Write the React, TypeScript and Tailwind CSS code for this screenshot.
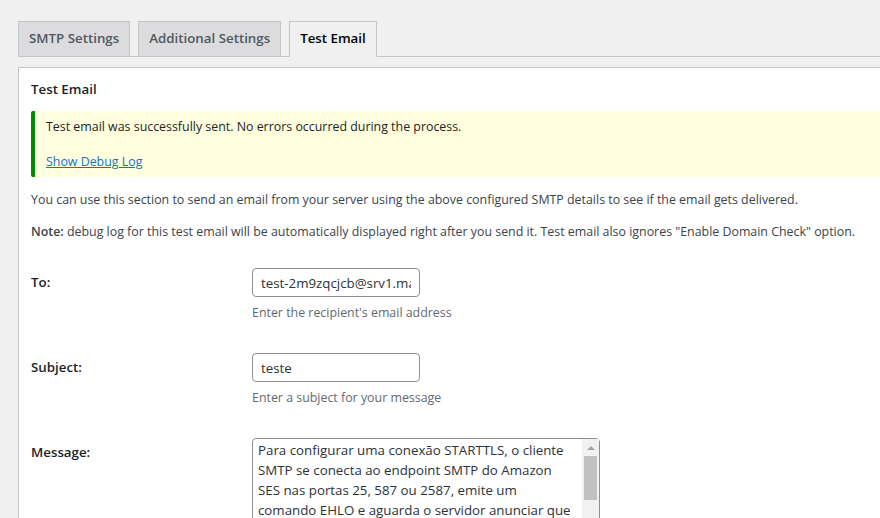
import React from "react";

const font = { fontFamily: '"Open Sans", "Noto Sans", sans-serif' };

const message =
  "Para configurar uma conexão STARTTLS, o cliente SMTP se conecta ao endpoint SMTP do Amazon SES nas portas 25, 587 ou 2587, emite um comando EHLO e aguarda o servidor anunciar que ele suporta a extensão SMTP STARTTLS. O cliente então emite o comando STARTTLS, iniciando a negociação TLS.";

function Tab({ label, active }: { label: string; active?: boolean }) {
  return (
    <div
      className={
        active
          ? "h-[36px] px-[10px] flex items-center border border-[#c3c4c7] border-b-[#f0f0f1] bg-[#f0f0f1] text-[13.3px] font-semibold text-black -mb-px"
          : "h-[36px] px-[10px] flex items-center border border-[#c3c4c7] bg-[#dcdcde] text-[13.3px] font-semibold text-[#50575e] -mb-px"
      }
    >
      {label}
    </div>
  );
}

function Field({ label, value, hint }: { label: string; value: string; hint: string }) {
  return (
    <div className="flex">
      <div className="w-[221px] pt-[5px] text-[13.3px] font-semibold text-[#1d2327]">{label}</div>
      <div>
        <input
          readOnly
          value={value}
          className="w-[168px] h-[29px] px-[8px] border border-[#8c8f94] rounded-[4px] text-[13.3px] text-[#2c3338] outline-none"
          style={font}
        />
        <p className="mt-[6px] text-[#646970] leading-[20px]">{hint}</p>
      </div>
    </div>
  );
}

export default function App() {
  return (
    <div className="w-[880px] h-[518px] overflow-hidden bg-[#f0f0f1] text-[#3c434a] text-[12.4px]" style={font}>
      <div className="pt-[21px] pl-[18px]">
        <div className="flex gap-[8px] border-b border-[#c3c4c7]">
          <Tab label="SMTP Settings" />
          <Tab label="Additional Settings" />
          <Tab label="Test Email" active />
        </div>

        <div className="mt-[10px] bg-white border border-[#c3c4c7] border-r-0 pl-[12px]">
          <h2 className="pt-[11px] pb-[12px] text-[13.3px] font-semibold text-[#1d2327] leading-[20px]">Test Email</h2>

          <div className="bg-[#ffffe0] border-l-4 border-[#008a00] rounded-l-[2px] pl-[11px] pt-[6px] pb-[5px] leading-[20px]">
            <p className="text-[#1d2327]">Test email was successfully sent. No errors occurred during the process.</p>
            <p className="mt-[15px]">
              <a href="#" className="text-[#2271b1] underline">Show Debug Log</a>
            </p>
          </div>

          <p className="mt-[13px] leading-[20px]">
            You can use this section to send an email from your server using the above configured SMTP details to see if the email gets delivered.
          </p>
          <p className="mt-[12px] leading-[20px]">
            <strong className="font-semibold">Note:</strong> debug log for this test email will be automatically displayed right after you send it. Test email also ignores "Enable Domain Check" option.
          </p>

          <div className="mt-[26px] flex flex-col gap-[30px]">
            <Field label="To:" value="test-2m9zqcjcb@srv1.mail-tester.com" hint="Enter the recipient's email address" />
            <Field label="Subject:" value="teste" hint="Enter a subject for your message" />

            <div className="flex">
              <div className="w-[221px] pt-[5px] text-[13.3px] font-semibold text-[#1d2327]">Message:</div>
              <div className="relative w-[348px] h-[110px]">
                <textarea
                  readOnly
                  value={message}
                  rows={5}
                  className="w-full h-full pl-[5px] pr-[22px] py-[1px] border border-[#8c8f94] rounded-[4px] text-[13.3px] leading-[20px] text-[#2c3338] outline-none resize-none overflow-hidden"
                  style={font}
                />
                <div className="absolute top-px right-px w-[17px] h-[108px] bg-[#f1f1f1] flex flex-col items-center">
                  <div className="h-[17px] flex items-center justify-center">
                    <div className="w-0 h-0 border-x-[4px] border-x-transparent border-b-[4px] border-b-[#a3a3a3]" />
                  </div>
                  <div className="w-[13px] h-[44px] bg-[#c1c1c1]" />
                  <div className="flex-1" />
                  <div className="h-[17px] flex items-center justify-center">
                    <div className="w-0 h-0 border-x-[4px] border-x-transparent border-t-[4px] border-t-[#505050]" />
                  </div>
                </div>
              </div>
            </div>
          </div>
        </div>
      </div>
    </div>
  );
}
